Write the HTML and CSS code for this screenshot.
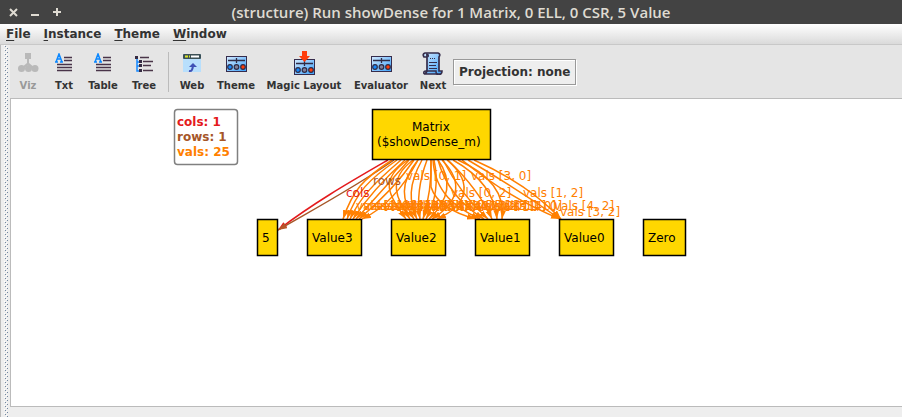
FILE: index.html
```html
<!DOCTYPE html>
<html lang="en">
<head>
<meta charset="utf-8">
<title>(structure) Run showDense for 1 Matrix, 0 ELL, 0 CSR, 5 Value</title>
<link rel="stylesheet" href="styles.css">
</head>
<body>
<svg class="defs" width="0" height="0" aria-hidden="true">
  <defs>
    <linearGradient id="blue" x1="0" y1="0" x2="1" y2="1"><stop offset="0" stop-color="#d4eaff"/><stop offset="1" stop-color="#3ba0fa"/></linearGradient>
    <symbol id="panel" viewBox="0 0 22 18">
      <rect x="1.500" y="1.500" width="20" height="15" fill="url(#blue)" stroke="#362c4c"/>
      <path d="M3 5.500h17M11.500 3v5" stroke="#302b45" stroke-width="1.300"/>
      <g stroke="#302b45" stroke-width="1.200"><circle cx="5" cy="12" r="2.300" fill="#1488ff"/><circle cx="11.500" cy="12" r="2.300" fill="#81809b"/><circle cx="18" cy="12" r="2.300" fill="#ff3c0a"/></g>
    </symbol>
    <symbol id="lines" viewBox="0 0 20 20">
      <path d="M10 4.500h8M10 7.500h8M3 11.500h15M3 14.500h15M3 17.500h15" stroke="#493449" stroke-width="1.300"/>
      <path d="M1 9h3M6 9h3M2 9l3-8 3 8M3 6h4" fill="none" stroke="#0a87ff" stroke-width="1.500"/>
    </symbol>
    <marker id="tip" markerUnits="userSpaceOnUse" markerWidth="10" markerHeight="8" refX="9" refY="3" orient="auto"><path d="M0 0l9 3-9 3z" fill="#ff8000"/></marker>
    <marker id="tipRed" markerUnits="userSpaceOnUse" markerWidth="10" markerHeight="8" refX="9" refY="3" orient="auto"><path d="M0 0l9 3-9 3z" fill="#e41a1c"/></marker>
    <marker id="tipBrown" markerUnits="userSpaceOnUse" markerWidth="10" markerHeight="8" refX="9" refY="3" orient="auto"><path d="M0 0l9 3-9 3z" fill="#b4572a"/></marker>
  </defs>
</svg>
<header class="titlebar">
  <div class="controls">
    <button aria-label="Close"><svg width="9" height="9"><path d="M1 1l7 7M8 1L1 8" stroke="#dfdbd2" stroke-width="2"/></svg></button>
    <button aria-label="Minimize"><svg width="9" height="9"><path d="M0 7h8" stroke="#dfdbd2" stroke-width="2"/></svg></button>
    <button aria-label="Maximize"><svg width="9" height="9"><path d="M0 4h8M4 0v8" stroke="#dfdbd2" stroke-width="2"/></svg></button>
  </div>
  <h1>(structure) Run showDense for 1 Matrix, 0 ELL, 0 CSR, 5 Value</h1>
</header>
<nav class="menubar">
  <button><u>F</u>ile</button><button><u>I</u>nstance</button><button><u>T</u>heme</button><button><u>W</u>indow</button>
</nav>
<div class="workspace">
  <svg class="grip" aria-hidden="true">
    <defs><pattern id="dots" width="6" height="4" patternUnits="userSpaceOnUse"><path d="M0 0h1v1H0zM2 2h1v1H2z" fill="#fff"/><path d="M1 1h1v1H1zM3 3h1v1H3z" fill="#7186a0"/></pattern></defs>
    <rect width="6" height="100%" fill="url(#dots)"/>
  </svg>
  <main>
    <div class="toolbar">
      <button class="tool viz" disabled><svg width="22" height="20"><g fill="#b9b9b9"><rect x="8" y="0" width="6" height="6"/><path d="M10 5h2v5l6 5-1 2-6-5-6 5-1-2 6-5z"/><circle cx="4.500" cy="15.500" r="3.500"/><circle cx="11.500" cy="15.500" r="3.500"/><circle cx="18" cy="15.500" r="3.500"/></g></svg>Viz</button>
      <button class="tool txt"><svg width="20" height="20"><use href="#lines"/></svg>Txt</button>
      <button class="tool table"><svg width="20" height="20"><use href="#lines"/></svg>Table</button>
      <button class="tool tree"><svg width="20" height="20"><path d="M3 4v14h4M3 9h3M3 13h3" fill="none" stroke="#1488ff" stroke-width="1.500"/><path d="M1 3h3v3H1zM5 7h3v3H5zM5 11h3v3H5zM5 16h3v3H5z" fill="#352b42"/><path d="M6 4.500h9M9 8.500h10M9 12.500h8M9 17.500h10" stroke="#4a3548" stroke-width="1.300"/></svg>Tree</button>
      <span class="separator"></span>
      <button class="tool web"><svg width="20" height="20"><rect x="1" y="1" width="18" height="18" fill="#b8dffc"/><rect x="1" y="1" width="18" height="5" rx="1" fill="#3c5056"/><path d="M3 3.500h3M7 3.500h1" stroke="#dce52b" stroke-width="2"/><path d="M9 3.500h8" stroke="#fff" stroke-width="2"/><path d="M7 18q4 1 4-7" fill="none" stroke="#3f51b5" stroke-width="2"/><path d="M7 14l4-4 4 4z" fill="#3f51b5"/></svg>Web</button>
      <button class="tool theme"><svg width="22" height="18"><use href="#panel"/></svg>Theme</button>
      <button class="tool magic"><svg width="22" height="25"><use href="#panel" y="7" width="22" height="18"/><path d="M9 0h5v5h3l-5.500 6-5.500-6h3z" fill="#ff3c0a"/></svg>Magic Layout</button>
      <button class="tool evaluator"><svg width="22" height="18"><use href="#panel"/></svg>Evaluator</button>
      <button class="tool next"><svg width="22" height="24"><path d="M5 3v15q0 3-3 4h14q4 1 4-3h-3V5q2-3-1-4H3Q0 2 2 5h3" fill="url(#blue)" stroke="#352d4b" stroke-width="1.700"/><path d="M2 22q-1-3 2-3h10q0 4 2 3M4 2q3 0 2 3" fill="none" stroke="#352d4b" stroke-width="1.500"/><path d="M8 6.500h6" stroke="#352d4b" stroke-dasharray="1 1"/><path d="M7 10.500h8M7 13.500h7M7 16.500h8" stroke="#352d4b"/></svg>Next</button>
      <button class="projection">Projection: none</button>
    </div>
    <section class="canvas">
      <svg class="graph" role="img" aria-label="Structure graph">
        <g transform="translate(-11 -99)">
          <g class="legend">
            <rect x="174.500" y="109.500" width="63" height="55" rx="3"/>
            <text class="cols" x="177" y="126">cols: 1</text>
            <text class="rows" x="177" y="141">rows: 1</text>
            <text class="vals" x="177" y="156">vals: 25</text>
          </g>
          <path class="cols" d="M388 160C350 182 315 202 278 230" marker-end="url(#tipRed)"/>
          <path class="rows" d="M394 160C357 186 316 208 278 230" marker-end="url(#tipBrown)"/>
          <g class="edges">
            <path d="M392 160C363 179 353 190 343 219"/><path d="M397 160C368 180 357 192 347 219"/><path d="M401 160C373 184 360 198 350 219"/><path d="M405 160C382 181 367 198 353 219"/><path d="M409 160C388 184 372 202 356 219"/><path d="M414 160C397 185 378 203 359 219"/><path d="M418 160C403 188 386 208 362 219"/>
            <path d="M408 160C378 180 389 195 406 219"/><path d="M413 160C386 180 397 200 410 219"/><path d="M418 160C399 183 402 201 414 219"/><path d="M422 160C408 185 409 202 417 219"/><path d="M427 160C418 184 417 202 420 219"/><path d="M431 160Q432 190 423 219"/><path d="M434 160Q441 192 426 219"/><path d="M438 160C454 182 447 202 429 219"/><path d="M442 160C466 184 456 204 432 219"/><path d="M447 160C478 186 462 208 437 219"/>
            <path d="M431 160V187Q438 209 476 219"/><path d="M433 160C435 193 456 208 480 219"/><path d="M438 160Q448 197 484 219"/><path d="M443 160Q461 195 488 219"/><path d="M448 160Q479 190 492 219"/><path d="M453 160Q494 183 497 219"/><path d="M458 160Q507 182 502 219"/>
            <path d="M462 160Q510 199 560 219"/><path d="M468 160Q519 190 560 219"/><path d="M474 160Q528 184 561 219"/>
          </g>
          <g class="nodes">
            <rect x="372.500" y="109.500" width="118" height="50"/>
            <rect x="257.500" y="219.500" width="20" height="36"/><rect x="307.500" y="219.500" width="54" height="36"/><rect x="391.500" y="219.500" width="54" height="36"/><rect x="475.500" y="219.500" width="54" height="36"/><rect x="559.500" y="219.500" width="54" height="36"/><rect x="643.500" y="219.500" width="42" height="36"/>
            <text x="412" y="131">Matrix</text><text x="377" y="146">($showDense_m)</text>
            <text x="262" y="242">5</text><text x="312" y="242">Value3</text><text x="396" y="242">Value2</text><text x="480" y="242">Value1</text><text x="564" y="242">Value0</text><text x="648" y="242">Zero</text>
          </g>
          <text class="cols" x="346" y="197">cols</text><text class="rows" x="373" y="185">rows</text>
          <g class="vals">
            <text x="406" y="180">vals [0, 1]</text><text x="471" y="180">vals [3, 0]</text>
            <text x="451" y="197">vals [0, 2]</text><text x="523" y="197">vals [1, 2]</text>
            <text x="356" y="210">vals [2, 4]</text><text x="363" y="210">vals [4, 4]</text><text x="369" y="210">vals [0, 3]</text><text x="376" y="210">vals [1, 4]</text><text x="384" y="210">vals [3, 3]</text><text x="391" y="210">vals [2, 0]</text><text x="399" y="210">vals [4, 3]</text><text x="408" y="210">vals [0, 4]</text><text x="416" y="210">vals [1, 1]</text><text x="424" y="210">vals [2, 3]</text><text x="432" y="210">vals [3, 4]</text><text x="441" y="210">vals [4, 1]</text><text x="450" y="210">vals [1, 3]</text><text x="458" y="210">vals [2, 2]</text><text x="467" y="210">vals [0, 0]</text><text x="477" y="210">vals [2, 1]</text><text x="486" y="210">vals [3, 1]</text><text x="496" y="210">vals [1, 0]</text><text x="502" y="210">vals [4, 0]</text>
            <text x="554" y="210">vals [4, 2]</text><text x="560" y="216">vals [3, 2]</text>
          </g>
        </g>
      </svg>
    </section>
  </main>
</div>
</body>
</html>
```

FILE: styles.css
```css
* { box-sizing: border-box; }
body {
  margin: 0;
  min-height: 100vh;
  display: flex;
  flex-direction: column;
  background: #eee;
  color: #333;
  font: 12px "DejaVu Sans", sans-serif;
}
button { padding: 0; border: 0; background: none; color: inherit; font: inherit; }
.defs { position: absolute; }
.titlebar {
  display: grid;
  grid-template-columns: 72px 1fr 72px;
  align-items: center;
  height: 24px;
  background: #434343;
  color: #dfdbd2;
}
.controls { display: flex; gap: 13px; padding-left: 9px; }
.controls svg { display: block; }
.titlebar h1 { margin: 0; text-align: center; font: 600 15px/24px "Open Sans", sans-serif; white-space: nowrap; }
.menubar {
  display: flex;
  gap: 13px;
  height: 21px;
  padding: 0 6px;
  border-bottom: 1px solid #c8c8c8;
  background: linear-gradient(#fff, #dadada);
  font-weight: bold;
}
.menubar button { line-height: 20px; }
.menubar u { text-underline-offset: 2px; }
.workspace { flex: 1; display: flex; border-left: 1px solid #bbb; }
.grip { width: 9px; height: auto; padding-left: 3px; flex: none; }
main { flex: 1; min-width: 0; display: flex; flex-direction: column; padding-bottom: 10px; }
.toolbar { display: flex; align-items: center; height: 53px; background: #e5e5e5; }
.tool {
  display: flex;
  flex-direction: column;
  justify-content: flex-end;
  align-items: center;
  gap: 7px;
  height: 41px;
  font: bold 10px/12px "DejaVu Sans", sans-serif;
  white-space: nowrap;
  flex: none;
}
.tool:disabled { color: #999; }
.viz { width: 36px; }
.txt { width: 36px; }
.table { width: 42px; }
.tree { width: 40px; }
.separator { width: 1px; height: 40px; margin: 0 4px; background: #bbb; }
.web { width: 38px; }
.theme { width: 50px; }
.magic { width: 86px; }
.evaluator { width: 68px; }
.next { width: 36px; }
.magic, .next { gap: 4px; }
.projection {
  margin-left: 2px;
  padding: 0 5px;
  height: 26px;
  border: 1px solid #999;
  background: #eee;
  box-shadow: inset 1px 1px #fff, 1px 1px #fff;
  font-weight: bold;
  white-space: nowrap;
}
.canvas { flex: 1; display: flex; border: solid #bbb; border-width: 1px 0 1px 1px; background: #fff; }
.graph { width: 100%; height: auto; min-height: 180px; }
path.cols { fill: none; stroke: #e41a1c; stroke-width: 1.5; }
path.rows { fill: none; stroke: #a65628; stroke-width: 1.5; }
text.cols { fill: #e41a1c; }
text.rows { fill: #a65628; }
.vals { fill: #ff7f00; }
.legend { font-weight: bold; }
.legend rect { fill: #fff; stroke: #808080; stroke-width: 1.5; }
.edges path { fill: none; stroke: #ff7f00; stroke-width: 1.5; marker-end: url(#tip); }
.nodes rect { fill: #ffd700; stroke: #000; stroke-width: 1.5; }
.nodes text { fill: #000; }
```
